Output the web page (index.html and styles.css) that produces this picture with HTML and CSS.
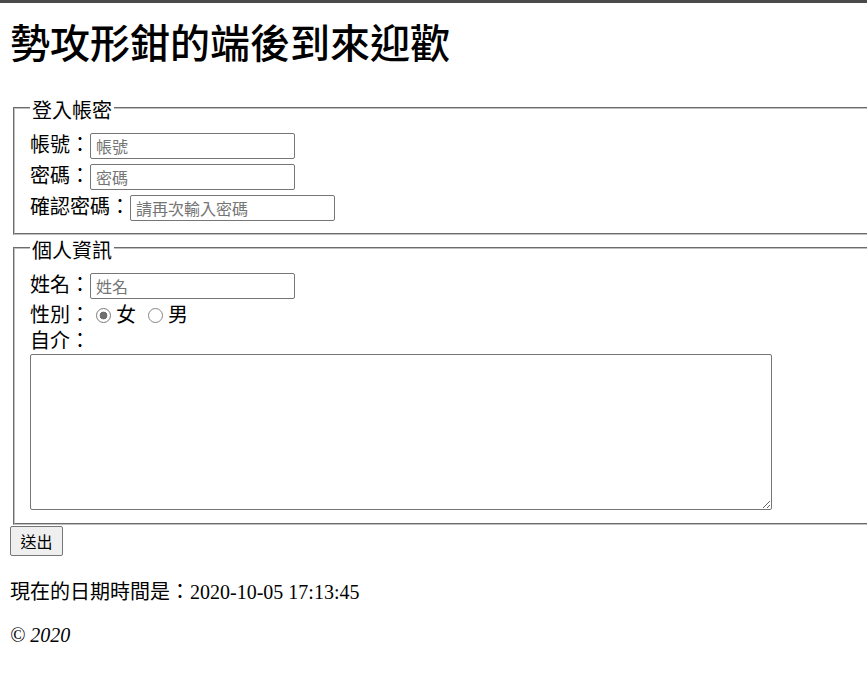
FILE: index.html
```html
<!DOCTYPE html>
<html lang="zh-Hant">
<head>
<meta charset="utf-8">
<title>歡迎來到後端的鉗形攻勢</title>
<link rel="stylesheet" href="styles.css">
</head>
<body>
<h1 class="title">勢攻形鉗的端後到來迎歡</h1>
<form class="form">
  <fieldset class="group">
    <legend class="group-title">登入帳密</legend>
    <div class="row">
      <label class="lbl" for="acc">帳號：</label><input class="field" id="acc" type="text" placeholder="帳號">
    </div>
    <div class="row">
      <label class="lbl" for="pwd">密碼：</label><input class="field" id="pwd" type="password" placeholder="密碼">
    </div>
    <div class="row">
      <label class="lbl" for="pwd2">確認密碼：</label><input class="field" id="pwd2" type="password" placeholder="請再次輸入密碼">
    </div>
  </fieldset>
  <fieldset class="group">
    <legend class="group-title">個人資訊</legend>
    <div class="row">
      <label class="lbl" for="name">姓名：</label><input class="field" id="name" type="text" placeholder="姓名">
    </div>
    <div class="row row-radio">
      <span class="lbl">性別：</span>
      <input class="radio" type="radio" name="gender" id="female" checked><label class="lbl" for="female">女</label>
      <input class="radio radio-gap" type="radio" name="gender" id="male"><label class="lbl" for="male">男</label>
    </div>
    <div class="row row-text">
      <label class="lbl" for="intro">自介：</label>
    </div>
    <textarea class="intro" id="intro"></textarea>
  </fieldset>
  <div class="actions">
    <button class="submit" type="submit">送出</button>
  </div>
</form>
<p class="now">現在的日期時間是：2020-10-05 17:13:45</p>
<p class="copy"><i>© 2020</i></p>
</body>
</html>
```
FILE: styles.css
```css
html {
  border-top: 3px solid #4a4a4a;
  background: #fff;
}

body {
  margin: 0 0 0 10px;
  font-family: "Liberation Serif", "Noto Sans CJK TC", serif;
  font-size: 20px;
  color: #000;
}

.title {
  margin: 12px 0 28px;
  font-family: "Noto Sans CJK TC", sans-serif;
  font-size: 40px;
  font-weight: 500;
  line-height: 52px;
  letter-spacing: 0;
}

.form {
  margin: 0;
  overflow: hidden;
}

.group {
  margin: 0 -12px 0 3px;
  padding: 9px 15px 10px;
  border: 2px groove #c0c0c0;
  min-width: 0;
}

.group-title {
  padding: 4px 2px 0;
  margin-left: 0;
  line-height: 22px;
  font-family: "Noto Sans CJK TC", sans-serif;
}

.row {
  display: flex;
  align-items: center;
  height: 31px;
}

.row-radio {
  height: 28px;
}

.row-text {
  height: 25px;
}

.lbl {
  font-family: "Noto Sans CJK TC", sans-serif;
  line-height: 26px;
  padding-bottom: 3px;
}

.field {
  box-sizing: border-box;
  width: 205px;
  height: 26px;
  margin: 0;
  padding: 0 5px;
  border: 1px solid #767676;
  border-radius: 2px;
  font-family: "Noto Sans CJK TC", sans-serif;
  font-size: 16px;
  color: #000;
  background: #fff;
}

.field::placeholder {
  color: #757575;
}

.radio {
  appearance: none;
  -webkit-appearance: none;
  flex: none;
  box-sizing: border-box;
  width: 15px;
  height: 15px;
  margin: 0 5px 0 6px;
  border: 1.5px solid #858585;
  border-radius: 50%;
  background: #fff;
}

.radio:checked {
  border-color: #7a7a7a;
  background: radial-gradient(circle, #6f6f6f 0 3.6px, #fff 4.2px);
}

.radio-gap {
  margin-left: 12px;
}

.intro {
  display: block;
  box-sizing: border-box;
  width: 742px;
  height: 156px;
  margin: 0 0 3px;
  padding: 2px;
  border: 1px solid #767676;
  border-radius: 2px;
  resize: both;
}

.actions {
  height: 35px;
  margin-top: 1px;
}

.submit {
  box-sizing: border-box;
  width: 53px;
  height: 30px;
  margin: 0;
  padding: 0;
  border: 1px solid #767676;
  border-radius: 2px;
  background: #efefef;
  font-family: "Noto Sans CJK TC", sans-serif;
  font-size: 16px;
  color: #000;
}

.now,
.copy {
  margin: 20px 0;
  line-height: 23px;
}
```
